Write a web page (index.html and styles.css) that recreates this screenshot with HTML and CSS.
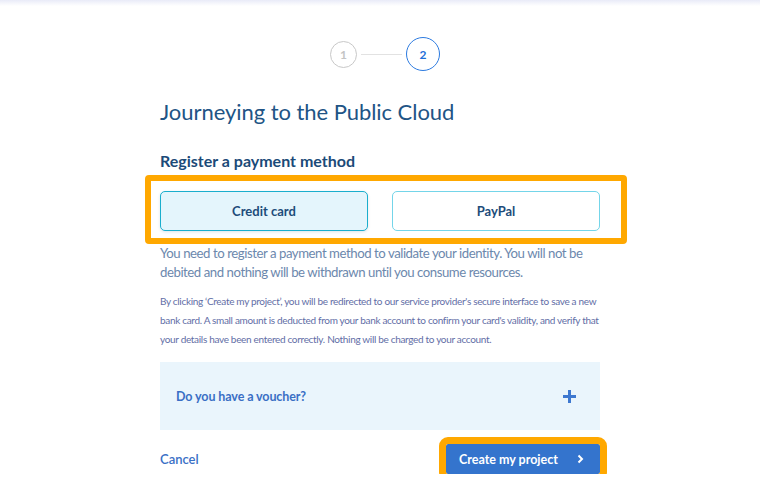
FILE: index.html
```html
<!DOCTYPE html>
<html lang="en">
<head>
<meta charset="utf-8">
<title>Journeying to the Public Cloud</title>
<link rel="stylesheet" href="styles.css">
</head>
<body>
<div class="topshade"></div>
<main class="page">
  <div class="stepper">
    <span class="step step-done">1</span>
    <span class="step-line"></span>
    <span class="step step-current">2</span>
  </div>

  <h1 class="title">Journeying to the Public Cloud</h1>

  <h2 class="subtitle">Register a payment method</h2>

  <div class="methods-wrap">
    <div class="methods">
      <button class="method method-active" type="button">Credit card</button>
      <button class="method" type="button">PayPal</button>
    </div>
    <span class="highlight"></span>
  </div>

  <p class="intro">You need to register a payment method to validate your identity. You will not be debited and nothing will be withdrawn until you consume resources.</p>

  <p class="notice">By clicking ‘Create my project’, you will be redirected to our service provider's secure interface to save a new bank card. A small amount is deducted from your bank account to confirm your card's validity, and verify that your details have been entered correctly. Nothing will be charged to your account.</p>

  <div class="voucher">
    <span class="voucher-label">Do you have a voucher?</span>
    <svg class="plus" width="13" height="13" viewBox="0 0 13 13" aria-hidden="true"><path d="M6.5 0v13M0 6.5h13" stroke="currentColor" stroke-width="3"/></svg>
  </div>

  <div class="actions">
    <a class="cancel" href="#">Cancel</a>
    <button class="primary" type="button">Create my project
      <svg class="chev" width="7" height="10" viewBox="0 0 7 10" aria-hidden="true"><path d="M1.5 1.5L5 5l-3.5 3.5" fill="none" stroke="currentColor" stroke-width="2"/></svg>
    </button>
  </div>
</main>
</body>
</html>
```

FILE: styles.css
```css
* { box-sizing: border-box; }

html, body {
  margin: 0;
  padding: 0;
  background: #ffffff;
}

body {
  font-family: "Source Sans Pro", Lato, "Noto Sans", sans-serif;
  color: #1d4c7a;
}

.topshade {
  height: 6px;
  background: linear-gradient(#e9ebf8, rgba(255,255,255,0));
}

.page {
  width: 440px;
  margin: 0 auto;
}

.stepper {
  display: flex;
  align-items: center;
  justify-content: center;
  padding-top: 31px;
  padding-left: 10px;
}

.step {
  display: flex;
  align-items: center;
  justify-content: center;
  border-radius: 50%;
  font-weight: 700;
  font-size: 12px;
}

.step-done {
  width: 27px;
  height: 27px;
  border: 1px solid #c8c8c8;
  color: #c4c4c4;
}

.step-current {
  width: 34px;
  height: 34px;
  border: 1.5px solid #2d7be0;
  color: #1f6fd8;
}

.step-line {
  width: 41px;
  height: 1px;
  margin: 0 4px;
  background: #e2e2e2;
}

.title {
  margin: 26px 0 0;
  font-size: 22px;
  line-height: 30px;
  font-weight: 400;
  letter-spacing: -0.05px;
  color: #215485;
}

.subtitle {
  margin: 24px 0 0;
  font-size: 16px;
  line-height: 20px;
  font-weight: 700;
  color: #1b4a78;
}

.methods-wrap {
  position: relative;
  margin-top: 20px;
}

.methods {
  display: grid;
  grid-template-columns: 1fr 1fr;
  gap: 24px;
}

.method {
  height: 40px;
  border: 1px solid #74d5e9;
  border-radius: 5px;
  background: #ffffff;
  font-family: inherit;
  font-size: 13px;
  font-weight: 700;
  color: #1d4c7a;
  cursor: pointer;
}

.method-active {
  border-color: #1aaecd;
  background: #e4f5fc;
  box-shadow: 0 1px 3px rgba(30, 80, 130, 0.15);
}

.highlight {
  position: absolute;
  top: -16px;
  left: -15px;
  right: -27px;
  bottom: -13px;
  border: 6px solid #ffa800;
  border-radius: 4px;
  pointer-events: none;
}

.intro {
  margin: 13px 0 0;
  font-size: 13.2px;
  line-height: 19px;
  letter-spacing: -0.45px;
  color: #6c88ad;
}

.notice {
  margin: 10px 0 0;
  font-size: 10px;
  line-height: 19px;
  letter-spacing: -0.32px;
  color: #626ea6;
}

.voucher {
  display: flex;
  align-items: center;
  justify-content: space-between;
  height: 68px;
  margin-top: 13px;
  padding: 0 24px 0 16px;
  background: #eaf5fc;
}

.voucher-label {
  font-size: 12.5px;
  font-weight: 700;
  letter-spacing: -0.1px;
  color: #3a6fc5;
}

.plus {
  color: #3d78d0;
}

.actions {
  display: flex;
  align-items: center;
  justify-content: space-between;
  margin-top: 14px;
}

.cancel {
  font-size: 13px;
  font-weight: 600;
  color: #3a70c6;
  text-decoration: none;
}

.primary {
  display: flex;
  align-items: center;
  justify-content: space-between;
  width: 154px;
  height: 30px;
  padding: 0 16px 0 13px;
  border: none;
  border-radius: 2px;
  background: #3474cd;
  color: #ffffff;
  font-family: inherit;
  font-size: 12.5px;
  font-weight: 700;
  outline: 7px solid #ffa800;
  cursor: pointer;
}

.chev {
  color: #ffffff;
}
```
